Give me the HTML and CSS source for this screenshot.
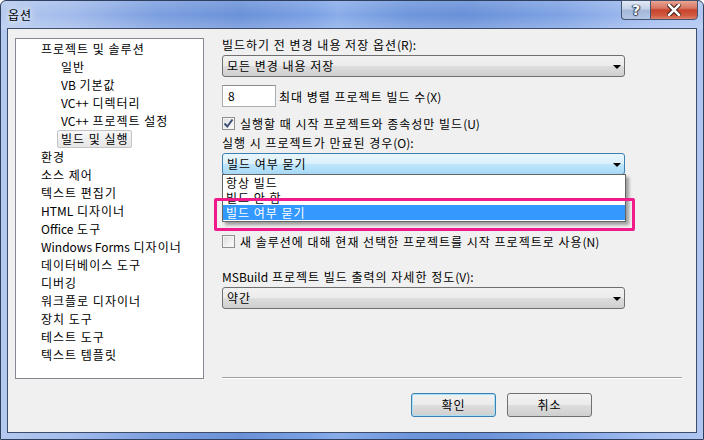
FILE: index.html
```html
<!DOCTYPE html>
<html>
<head>
  <title>옵션</title>
  <link rel="stylesheet" href="styles.css">
</head>
<body>
  <div class="window">
    <div class="titlebar">
      <span class="title">옵션</span>
      <div class="caption-buttons">
        <div class="cap-btn help">?</div>
        <div class="cap-btn close">
          <svg width="14" height="12" viewBox="0 0 14 12">
            <path d="M2 1 L12 11 M12 1 L2 11" stroke="#3a1a14" stroke-width="4.5" stroke-linecap="square" fill="none"/>
            <path d="M2 1 L12 11 M12 1 L2 11" stroke="#fff" stroke-width="2.5" stroke-linecap="square" fill="none"/>
          </svg>
        </div>
      </div>
    </div>

    <div class="client">
      <div class="tree">
        <div class="node">프로젝트 및 솔루션</div>
        <div class="node child">일반</div>
        <div class="node child"><span class="en">VB</span> 기본값</div>
        <div class="node child"><span class="en">VC++</span> 디렉터리</div>
        <div class="node child"><span class="en">VC++</span> 프로젝트 설정</div>
        <div class="node child"><span class="selected">빌드 및 실행</span></div>
        <div class="node">환경</div>
        <div class="node">소스 제어</div>
        <div class="node">텍스트 편집기</div>
        <div class="node"><span class="en">HTML</span> 디자이너</div>
        <div class="node"><span class="en">Office</span> 도구</div>
        <div class="node"><span class="en">Windows Forms</span> 디자이너</div>
        <div class="node">데이터베이스 도구</div>
        <div class="node">디버깅</div>
        <div class="node">워크플로 디자이너</div>
        <div class="node">장치 도구</div>
        <div class="node">테스트 도구</div>
        <div class="node">텍스트 템플릿</div>
      </div>

      <div class="panel">
        <div class="options">
          <div class="field-label">빌드하기 전 변경 내용 저장 옵션<span class="en">(R):</span></div>
          <div class="combo">모든 변경 내용 저장<span class="arrow"></span></div>

          <div class="row">
            <div class="textbox">8</div>
            <span class="row-label">최대 병렬 프로젝트 빌드 수<span class="en">(X)</span></span>
          </div>

          <div class="check-row">
            <span class="checkbox">
              <svg width="11" height="11" viewBox="0 0 11 11">
                <path d="M1.5 5.5 L4.3 8.5 L9.5 1.5" stroke="#3d5078" stroke-width="2" fill="none"/>
              </svg>
            </span>
            실행할 때 시작 프로젝트와 종속성만 빌드<span class="en">(U)</span>
          </div>

          <div class="field-label gap-label">실행 시 프로젝트가 만료된 경우<span class="en">(O):</span></div>
          <div class="combo-wrap">
            <div class="combo focused">빌드 여부 묻기<span class="arrow"></span></div>
            <div class="dropdown">
              <div class="item">항상 빌드</div>
              <div class="item">빌드 안 함</div>
              <div class="item active">빌드 여부 묻기</div>
            </div>
            <div class="mark"></div>
          </div>

          <div class="check-row second">
            <span class="checkbox"></span>
            새 솔루션에 대해 현재 선택한 프로젝트를 시작 프로젝트로 사용<span class="en">(N)</span>
          </div>

          <div class="field-label msbuild"><span class="en">MSBuild</span> 프로젝트 빌드 출력의 자세한 정도<span class="en">(V):</span></div>
          <div class="combo">약간<span class="arrow"></span></div>
        </div>

        <div class="separator"></div>

        <div class="buttons">
          <div class="btn default">확인</div>
          <div class="btn">취소</div>
        </div>
      </div>
    </div>
  </div>
</body>
</html>
```

FILE: styles.css
```css
* {
  box-sizing: border-box;
}

body {
  margin: 0;
  background: #fff;
  font-family: "Noto Sans CJK KR", "Noto Sans", sans-serif;
  font-size: 12px;
  letter-spacing: 1px;
  color: #000;
}

/* latin words keep their normal spacing */
.en {
  letter-spacing: 0;
}

/* window frame */
.window {
  width: 704px;
  height: 440px;
  padding: 0 6px 6px 6px;
  border: 1px solid #2e3f60;
  border-radius: 6px 6px 0 0;
  display: flex;
  flex-direction: column;
  background:
    linear-gradient(180deg, rgba(255,255,255,0.15) 0px, rgba(255,255,255,0) 14px, rgba(255,255,255,0.2) 28px, rgba(0,0,0,0) 29px),
    linear-gradient(90deg, #b4c9ef 0%, #a2bbeb 10%, #7c9fe0 22%, #6a91d8 34%, #7aa0e4 44%, #89ace9 48%, #6e96dc 58%, #6890d8 66%, #7fa3e4 80%, #a3bdf0 92%, #afc6f2 100%);
}

.titlebar {
  height: 27px;
  display: flex;
  justify-content: space-between;
  align-items: flex-start;
  margin-right: -1px;
}

.title {
  padding: 6px 0 0 1px;
  line-height: 16px;
  text-shadow: 0 0 6px #fff, 0 0 10px rgba(255,255,255,0.8);
}

.caption-buttons {
  display: flex;
  margin-top: -1px;
}

.cap-btn {
  height: 20px;
  border: 1px solid #45536e;
  display: flex;
  align-items: center;
  justify-content: center;
}

.help {
  width: 29px;
  border-right: none;
  border-radius: 0 0 0 4px;
  background: linear-gradient(#e2e9f5 0%, #c3d1e8 45%, #a5b8d8 50%, #b2c5e4 100%);
  color: #fff;
  font-family: "DejaVu Sans", sans-serif;
  font-weight: bold;
  font-size: 14px;
  letter-spacing: 0;
  text-shadow: 0 0 1px #2d3a52, 1px 0 1px #2d3a52, -1px 0 1px #2d3a52, 0 1px 1px #2d3a52;
}

.close {
  width: 48px;
  border-radius: 0 0 4px 0;
  background: linear-gradient(#e8a493 0%, #d77561 40%, #c7432d 50%, #d05a41 80%, #e0826b 100%);
}

/* client area */
.client {
  flex: 1;
  border: 1px solid #3e4e6a;
  background: #f0f0f0;
  padding: 9px 0 0 7px;
  display: flex;
  align-items: flex-start;
}

.tree {
  width: 189px;
  height: 341px;
  border: 1px solid #828790;
  background: #fff;
  padding-top: 1px;
  margin-right: 18px;
}

.node {
  height: 18px;
  line-height: 18px;
  padding-left: 25px;
  white-space: nowrap;
}

.node.child {
  padding-left: 45px;
}

.selected {
  display: inline-block;
  margin-left: -4px;
  padding: 0 2px 0 3px;
  height: 18px;
  line-height: 16px;
  border: 1px solid #c4c4c4;
  border-radius: 2px;
  background: linear-gradient(#f8f8f8, #e5e5e5);
}

.panel {
  width: 460px;
  display: flex;
  flex-direction: column;
}

.options {
  height: 339px;
}

.field-label {
  line-height: 14px;
  margin-bottom: 3px;
  white-space: nowrap;
}

.gap-label {
  margin-top: 6px;
}

.msbuild {
  margin-top: 22px;
}

.combo {
  position: relative;
  width: 403px;
  height: 22px;
  line-height: 20px;
  padding-left: 4px;
  border: 1px solid #707070;
  border-radius: 3px;
  background: linear-gradient(#f2f2f2 0%, #ebebeb 50%, #dddddd 51%, #cfcfcf 100%);
}

.combo.focused {
  border-color: #3c7fb1;
  background: linear-gradient(#eaf6fd 0%, #d9f0fc 50%, #bee6fd 51%, #a7d9f5 100%);
}

.arrow {
  position: absolute;
  right: 3px;
  top: 9px;
  border-left: 4px solid transparent;
  border-right: 4px solid transparent;
  border-top: 4px solid #000;
}

.row {
  display: flex;
  align-items: center;
  margin-top: 8px;
}

.textbox {
  width: 54px;
  height: 22px;
  line-height: 20px;
  padding-left: 5px;
  border: 1px solid #abadb3;
  border-top-color: #8a8d94;
  background: #fff;
}

.row-label {
  margin-left: 3px;
}

.check-row {
  display: flex;
  align-items: center;
  height: 14px;
  margin-top: 9px;
  white-space: nowrap;
}

.check-row.second {
  margin-top: 59px;
}

.checkbox {
  width: 13px;
  height: 13px;
  margin-right: 5px;
  border: 1px solid #8e8f8f;
  background: linear-gradient(135deg, #dcdcdc, #fefefe);
  box-shadow: inset 0 0 0 1px #f4f4f4;
  display: flex;
  align-items: center;
  justify-content: center;
}

/* open drop-down of the second combo */
.combo-wrap {
  position: relative;
}

.dropdown {
  position: absolute;
  left: 0;
  top: 21px;
  width: 404px;
  height: 48px;
  border: 1px solid #646464;
  background: #fff;
  box-shadow: 3px 3px 3px rgba(0,0,0,0.35);
  z-index: 2;
}

.item {
  height: 15px;
  line-height: 15px;
  padding-left: 3px;
}

.item.active {
  background: #3399ff;
  color: #fff;
}

.mark {
  position: absolute;
  left: -8px;
  top: 45px;
  width: 421px;
  height: 33px;
  border: 3px solid #f01a8a;
  border-radius: 2px;
  z-index: 3;
}

.separator {
  height: 2px;
  border-top: 1px solid #a0a0a0;
  border-bottom: 1px solid #fff;
}

.buttons {
  display: flex;
  gap: 11px;
  margin-top: 14px;
  padding-left: 189px;
}

.btn {
  width: 85px;
  height: 24px;
  line-height: 22px;
  text-align: center;
  border: 1px solid #707070;
  border-radius: 3px;
  background: linear-gradient(#f2f2f2 0%, #ebebeb 50%, #dddddd 51%, #cfcfcf 100%);
}

.btn.default {
  border-color: #3c7fb1;
  box-shadow: inset 0 0 0 1px #a8e0fa;
}
```
